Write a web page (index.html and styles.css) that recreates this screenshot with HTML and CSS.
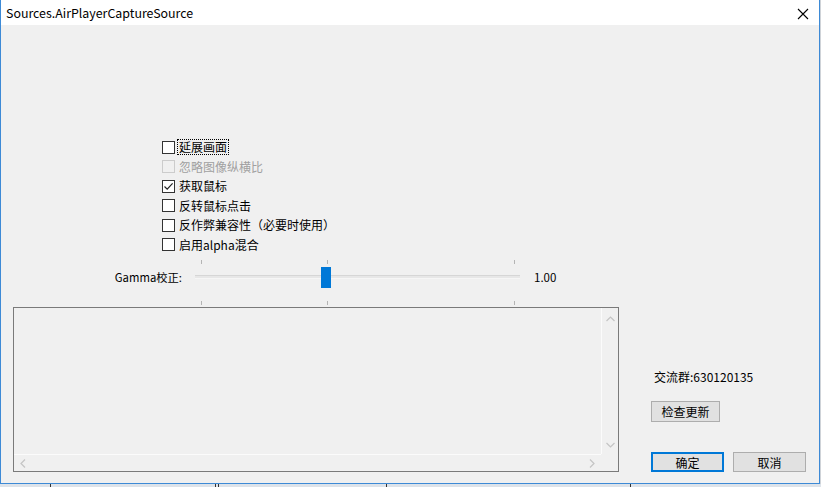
FILE: index.html
```html
<!DOCTYPE html>
<html lang="zh-CN">
<head>
<meta charset="UTF-8">
<title>Sources.AirPlayerCaptureSource</title>
<link rel="stylesheet" href="styles.css">
</head>
<body>

<div class="window">
    <div class="titlebar">
        <span class="title">Sources.AirPlayerCaptureSource</span>
        <span class="close">
            <svg width="12" height="12" viewBox="0 0 12 12"><path d="M1 1 L11 11 M11 1 L1 11" stroke="#000" stroke-width="1.1"/></svg>
        </span>
    </div>

    <div class="content">
        <div class="options">
            <label class="opt"><span class="box"></span><span class="txt focus">延展画面</span></label>
            <label class="opt disabled"><span class="box"></span><span class="txt">忽略图像纵横比</span></label>
            <label class="opt"><span class="box">
                <svg width="11" height="11" viewBox="0 0 11 11"><path d="M1.5 5.5 L4.2 8.2 L9.6 2.3" fill="none" stroke="#222" stroke-width="1.2"/></svg>
            </span><span class="txt">获取鼠标</span></label>
            <label class="opt"><span class="box"></span><span class="txt">反转鼠标点击</span></label>
            <label class="opt"><span class="box"></span><span class="txt">反作弊兼容性（必要时使用）</span></label>
            <label class="opt"><span class="box"></span><span class="txt">启用alpha混合</span></label>
        </div>

        <div class="slider-row">
            <span class="slider-label">Gamma校正:</span>
            <div class="slider">
                <span class="track"></span>
                <span class="tick top" style="left: 6px"></span>
                <span class="tick top" style="left: 132px"></span>
                <span class="tick top" style="left: 319px"></span>
                <span class="tick bottom" style="left: 6px"></span>
                <span class="tick bottom" style="left: 132px"></span>
                <span class="tick bottom" style="left: 319px"></span>
                <span class="thumb"></span>
            </div>
            <span class="slider-value">1.00</span>
        </div>

        <div class="bottom">
            <div class="textbox">
                <div class="text-area"></div>
                <div class="vscroll">
                    <svg width="9" height="6" viewBox="0 0 9 6"><path d="M0.5 5 L4.5 1 L8.5 5" fill="none" stroke="#c4c4c4" stroke-width="1.2"/></svg>
                    <svg width="9" height="6" viewBox="0 0 9 6"><path d="M0.5 1 L4.5 5 L8.5 1" fill="none" stroke="#c4c4c4" stroke-width="1.2"/></svg>
                </div>
                <div class="hscroll">
                    <svg width="6" height="9" viewBox="0 0 6 9"><path d="M5 0.5 L1 4.5 L5 8.5" fill="none" stroke="#c4c4c4" stroke-width="1.2"/></svg>
                    <svg width="6" height="9" viewBox="0 0 6 9"><path d="M1 0.5 L5 4.5 L1 8.5" fill="none" stroke="#c4c4c4" stroke-width="1.2"/></svg>
                </div>
                <div class="corner"></div>
            </div>

            <div class="side">
                <p class="group">交流群:630120135</p>
                <button class="btn update">检查更新</button>
                <div class="actions">
                    <button class="btn primary">确定</button>
                    <button class="btn">取消</button>
                </div>
            </div>
        </div>
    </div>
</div>
<div class="behind">
    <span class="mark" style="left: 50px"></span>
    <span class="mark" style="left: 215px"></span>
    <span class="mark" style="left: 218px"></span>
    <span class="mark" style="left: 386px"></span>
    <span class="mark" style="left: 630px"></span>
</div>

</body>
</html>
```

FILE: styles.css
```css
* {
    box-sizing: border-box;
}
body {
    margin: 0;
    width: 821px;
    height: 487px;
    overflow: hidden;
    background: #cfd3d8;
    font-family: "Noto Sans CJK SC", "Liberation Sans", sans-serif;
    font-size: 12px;
    color: #000;
}
.window {
    width: 820px;
    height: 484px;
    border: 1px solid #3d8ad6;
    border-top: none;
    background: #f0f0f0;
    display: flex;
    flex-direction: column;
}
.titlebar {
    height: 25px;
    background: #fff;
    display: flex;
    align-items: center;
    justify-content: space-between;
    padding: 0 10px 0 5px;
}
.title {
    font-family: "Noto Sans CJK SC", sans-serif;
    font-size: 12.4px;
    line-height: 16px;
}
.close {
    display: flex;
    margin-top: 2px;
}
.content {
    flex: 1;
    padding: 112px 0 0 12px;
    display: flex;
    flex-direction: column;
}
.options {
    padding-left: 149px;
    display: flex;
    flex-direction: column;
}
.opt {
    height: 19.5px;
    display: flex;
    align-items: center;
    padding-top: 1px;
}
.box {
    width: 13px;
    height: 13px;
    border: 1px solid #333;
    background: #fff;
    display: flex;
    align-items: center;
    justify-content: center;
    margin-right: 2px;
}
.txt {
    line-height: 14px;
    padding: 0 1px;
    border: 1px dotted transparent;
}
.txt.focus {
    border-color: #000;
}
.disabled .box {
    border-color: #cccccc;
    background: #f0f0f0;
}
.disabled .txt {
    color: #a0a0a0;
}
.slider-row {
    margin-top: 5px;
    height: 36px;
    display: flex;
    align-items: center;
    padding-left: 88px;
}
.slider-label {
    width: 82px;
    text-align: right;
    font-size: 11.3px;
    padding-right: 1px;
}
.slider {
    position: relative;
    width: 325px;
    height: 36px;
    margin-left: 12px;
}
.track {
    position: absolute;
    left: 0;
    right: 0;
    top: 16px;
    height: 4px;
    background: #e7e7e7;
    border-top: 1px solid #d6d6d6;
    border-bottom: 1px solid #f6f6f6;
}
.tick {
    position: absolute;
    width: 1px;
    height: 4px;
    background: #b4b4b4;
}
.tick.top {
    top: 1px;
}
.tick.bottom {
    top: 30px;
}
.thumb {
    position: absolute;
    left: 126px;
    top: 8px;
    width: 10px;
    height: 21px;
    background: #0078d7;
}
.slider-value {
    margin-left: 14px;
    font-size: 11.5px;
}
.bottom {
    margin-top: 12px;
    display: flex;
}
.textbox {
    width: 606px;
    height: 165px;
    border: 1px solid #7a7a7a;
    display: grid;
    grid-template-columns: 1fr 17px;
    grid-template-rows: 1fr 17px;
}
.text-area {
    background: #f0f0f0;
}
.vscroll {
    border-left: 1px solid #fbfbfb;
    display: flex;
    flex-direction: column;
    justify-content: space-between;
    align-items: center;
    padding: 8px 0 6px;
}
.hscroll {
    border-top: 1px solid #fbfbfb;
    display: flex;
    justify-content: space-between;
    align-items: center;
    padding: 0 6px 0 6px;
}
.corner {
    background: #f0f0f0;
}
.side {
    margin-left: 32px;
    display: flex;
    flex-direction: column;
    align-items: flex-start;
}
.group {
    margin: 62px 0 0 3px;
    line-height: 16px;
}
.btn {
    font-family: "Noto Sans CJK SC", sans-serif;
    font-size: 12px;
    height: 21px;
    padding: 0;
    background: #e1e1e1;
    border: 1px solid #adadad;
    color: #000;
    line-height: 17px;
}
.update {
    width: 69px;
    margin-top: 16px;
}
.actions {
    margin-top: 30px;
    display: flex;
    gap: 9px;
}
.actions .btn {
    width: 73px;
    height: 20px;
}
.btn.primary {
    border: 2px solid #0078d7;
}
.behind {
    position: relative;
    height: 3px;
    background: #dde3ea;
}
.mark {
    position: absolute;
    top: 0;
    width: 1px;
    height: 3px;
    background: #333;
}
```
